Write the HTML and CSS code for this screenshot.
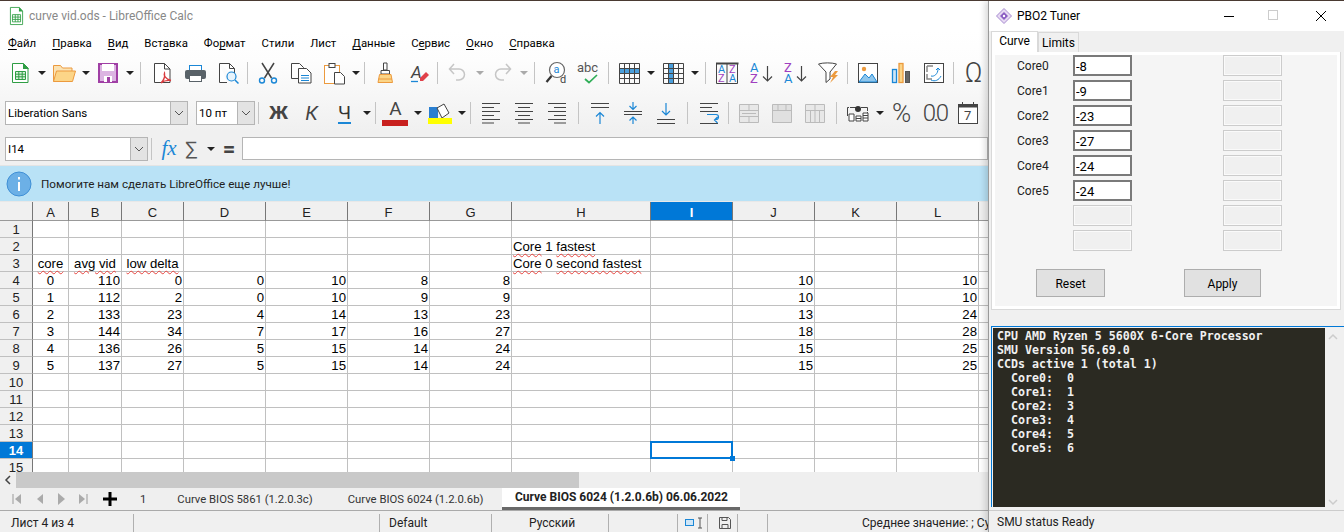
FILE: index.html
```html
<!DOCTYPE html>
<html lang="en">
<head>
    <meta charset="UTF-8">
    <title>curve vid.ods - LibreOffice Calc</title>
    <link rel="stylesheet" href="styles.css">
</head>
<body>
<div class="calc">
    <div class="chrome">
        <div class="titlebar">
            <svg width="13" height="18" viewBox="0 0 16 20" preserveAspectRatio="none"><path d="M.5.5h11l4 4v15H.5z" fill="#fff" stroke="#2f9e44"/><path d="M11 0l5 5h-5z" fill="#2f9e44"/><path d="M3 8.500h10v8H3zM3 11.200h10M3 13.800h10M6.500 8.500v8M9.800 8.500v8" fill="none" stroke="#2f9e44"/></svg>
            <span class="title-text">curve vid.ods - LibreOffice Calc</span>
        </div>
        <div class="menubar">
            <span><u>Ф</u>айл</span><span><u>П</u>равка</span><span><u>В</u>ид</span><span>Вст<u>а</u>вка</span><span>Фо<u>р</u>мат</span><span>Стили</span><span>Лист</span><span><u>Д</u>анные</span><span>С<u>е</u>рвис</span><span><u>О</u>кно</span><span><u>С</u>правка</span>
        </div>

        <!-- standard toolbar -->
        <div class="toolbar tb-standard">
            <div class="btn"><svg width="24" height="24"><path d="M4.500 2.500h11l4.500 4.500v14.500H4.500z" fill="#fff" stroke="#2f9e44"/><path d="M15 2l6 6h-6z" fill="#2f9e44"/><path d="M7.500 10.500h10v8h-10zM7.500 13.200h10M7.500 15.800h10M10.800 10.500v8M14.200 10.500v8" fill="#d9f0dc" stroke="#2f9e44"/></svg></div>
            <div class="arrow"></div>
            <div class="btn"><svg width="24" height="24"><path d="M1.500 20.500v-16h7l2 2.500h9.500v3" fill="#fbe3b4" stroke="#ec9a3e"/><path d="M1.500 20.500l3-10.500h19l-3 10.500z" fill="#fcd588" stroke="#ec9a3e"/></svg></div>
            <div class="arrow"></div>
            <div class="btn"><svg width="24" height="24"><rect x="3" y="3" width="18" height="18" fill="#dcb4e2" stroke="#a03fa5" stroke-width="2"/><rect x="6" y="3" width="12" height="7" fill="#fff"/><rect x="8" y="15" width="8" height="6" fill="#fff"/><rect x="11" y="16" width="3" height="5" fill="#a03fa5"/></svg></div>
            <div class="arrow"></div>
            <div class="sep sep-w"></div>
            <div class="btn"><svg width="24" height="24"><path d="M4.500 2.500h10l5.500 5.500v13.500H4.500z" fill="#fff" stroke="#444"/><path d="M14.500 2.500v5.500h5.500" fill="none" stroke="#444"/><path d="M11 22c3-3 4-7 3.500-10-1 2 .5 6 6.500 7.500-4-.5-7 0-10 2.500z" fill="none" stroke="#d93a3e" stroke-width="1.300"/></svg></div>
            <div class="btn"><svg width="24" height="24"><rect x="6.500" y="4.500" width="12" height="6" fill="#fff" stroke="#1b87d6"/><rect x="2" y="9" width="21" height="9" rx="2" fill="#596268"/><rect x="6.500" y="14.500" width="12" height="6" fill="#fff" stroke="#596268"/></svg></div>
            <div class="btn"><svg width="24" height="24"><path d="M3.500 2.500h10l5 5v7M11 21.500H3.500v-19" fill="#fff" stroke="#444"/><path d="M13.500 2.500v5h5" fill="none" stroke="#444"/><circle cx="15.500" cy="15.500" r="4.500" fill="#e8f4fc" stroke="#1b87d6" stroke-width="1.200"/><path d="M19 19l3.500 3.500" stroke="#1b87d6" stroke-width="1.500"/></svg></div>
            <div class="sep"></div>
            <div class="btn"><svg width="24" height="24"><path d="M6 2l9.500 15M18 2L8.500 17" stroke="#444" stroke-width="1.500" fill="none"/><circle cx="6" cy="19.500" r="2.500" fill="none" stroke="#1b87d6" stroke-width="1.400"/><circle cx="18" cy="19.500" r="2.500" fill="none" stroke="#1b87d6" stroke-width="1.400"/></svg></div>
            <div class="btn"><svg width="24" height="24"><path d="M2.500 2.500h8l4 4v11h-12z" fill="#fff" stroke="#444"/><path d="M9.500 7.500h8l4.500 4.500v10H9.500z" fill="#fff" stroke="#444"/><path d="M12 14.500h8M12 17h8M12 19.500h8" stroke="#1b87d6"/></svg></div>
            <div class="btn"><svg width="24" height="24"><rect x="2.500" y="4.500" width="15" height="18" fill="#fff" stroke="#ec9a3e"/><rect x="7" y="2.500" width="6" height="4" fill="#fff" stroke="#444"/><path d="M12.500 11.500h6l4 4v7.500h-10z" fill="#fff" stroke="#444"/></svg></div>
            <div class="arrow"></div>
            <div class="sep"></div>
            <div class="btn"><svg width="24" height="24"><path d="M10.500 2h3.500v7h-3.500z" fill="#fff" stroke="#444"/><path d="M8 9.500h8.500v3.500H8z" fill="#fff" stroke="#444"/><path d="M6.500 13.500h11.500l1.500 8H5z" fill="#fbd588" stroke="#ec9a3e"/><path d="M5.500 18h13.500" stroke="#ec9a3e"/></svg></div>
            <div class="btn"><svg width="24" height="24"><text x="5" y="17" class="svg-a">A</text><path d="M5 20.500h7" stroke="#1b87d6" stroke-width="1.300"/><path d="M14 17l6-6 3 3-6 6h-3z" fill="#e0414a"/></svg></div>
            <div class="sep"></div>
            <div class="btn"><svg width="24" height="24"><path d="M8 3L3.500 8 8 13M4 8h9a5.500 5.500 0 0 1 0 11h-3" fill="none" stroke="#c6c6c6" stroke-width="1.500"/></svg></div>
            <div class="arrow off"></div>
            <div class="btn"><svg width="24" height="24"><path d="M16 3l4.500 5-4.500 5M20 8h-9a5.500 5.500 0 0 0 0 11h3" fill="none" stroke="#c6c6c6" stroke-width="1.500"/></svg></div>
            <div class="arrow off"></div>
            <div class="sep sep-w"></div>
            <div class="btn"><svg width="24" height="24"><circle cx="13" cy="9" r="7.500" fill="#fff" stroke="#666" stroke-width="1.200"/><path d="M7.500 15L2.500 21" stroke="#333" stroke-width="2.200"/><text x="9.500" y="12" class="svg-s blue">a</text><text x="16" y="22" class="svg-s dark">d</text></svg></div>
            <div class="btn"><svg width="26" height="24"><text x="1" y="11" class="svg-abc">abc</text><path d="M9 18l4 3.500 8-7.500" fill="none" stroke="#2fae57" stroke-width="1.700"/></svg></div>
            <div class="sep"></div>
            <div class="btn"><svg width="24" height="24"><path d="M2 7h20v5H2z" fill="#4b9fdc"/><path d="M2.500 2.500h20v20h-20zM2.500 7.500h20M2.500 12.500h20M2.500 17.500h20M7.500 2.500v20M12.500 2.500v20M17.500 2.500v20" fill="none" stroke="#444"/></svg></div>
            <div class="arrow"></div>
            <div class="btn"><svg width="24" height="24"><path d="M8 2h5v20H8z" fill="#4b9fdc"/><path d="M2.500 2.500h20v20h-20zM2.500 7.500h20M2.500 12.500h20M2.500 17.500h20M7.500 2.500v20M12.500 2.500v20M17.500 2.500v20" fill="none" stroke="#444"/></svg></div>
            <div class="arrow"></div>
            <div class="sep sep-w"></div>
            <div class="btn"><svg width="24" height="24"><path d="M1 2.500h22.500" stroke="#444" stroke-width="2"/><path d="M1.500 2.500h21v20h-21zM12 2.500v20" fill="none" stroke="#444"/><text x="3" y="12" class="svg-s blue">A</text><text x="3" y="21" class="svg-s purple">Z</text><text x="14" y="12" class="svg-s purple">Z</text><text x="14" y="21" class="svg-s blue">A</text></svg></div>
            <div class="btn btn-wide"><svg width="24" height="24"><text x="1" y="11" class="svg-m blue">A</text><text x="1" y="22" class="svg-m purple">Z</text><path d="M18.500 5v15M14 15.500l4.500 4.500 4.500-4.500" fill="none" stroke="#444" stroke-width="1.200"/></svg></div>
            <div class="btn"><svg width="24" height="24"><text x="1" y="11" class="svg-m purple">Z</text><text x="1" y="22" class="svg-m blue">A</text><path d="M18.500 5v15M14 15.500l4.500 4.500 4.500-4.500" fill="none" stroke="#444" stroke-width="1.200"/></svg></div>
            <div class="btn"><svg width="24" height="24"><path d="M2.500 3c5-1.500 13-1.500 18 0l-6.500 8v7l-4 3.500V11z" fill="#fff" stroke="#444"/><path d="M19 10l-5 6h3l-3 6 8-8h-3l3-4z" fill="#ec9a3e"/></svg></div>
            <div class="sep"></div>
            <div class="btn"><svg width="24" height="24"><rect x="2.500" y="2.500" width="19" height="19" fill="#fff" stroke="#444"/><circle cx="8" cy="8" r="2.200" fill="#ec9a3e"/><path d="M3 21l6-8 4 4 3-4 5 8z" fill="#8fc6ec" stroke="#1b87d6"/></svg></div>
            <div class="btn"><svg width="24" height="24"><rect x="3.500" y="8.500" width="4" height="13" fill="#cfe6f7" stroke="#1b87d6" stroke-width="1.300"/><rect x="10" y="2.500" width="4" height="19" fill="#fbd588" stroke="#ec9a3e" stroke-width="1.300"/><rect x="16.500" y="10.500" width="4" height="11" fill="#666" stroke="#555"/></svg></div>
            <div class="btn"><svg width="24" height="24"><rect x="2.500" y="2.500" width="19" height="19" fill="#fff" stroke="#444"/><path d="M5 5h6M5 5v6M5 13v5h5" fill="none" stroke="#888" stroke-width="1.500"/><path d="M9 15c3 1 7-2 7-7M14 9l2-2 2 2M9 19c4 2 8 0 10-4" fill="none" stroke="#1b87d6"/></svg></div>
            <div class="sep"></div>
            <div class="btn btn-text omega">Ω</div>
        </div>

        <!-- formatting toolbar -->
        <div class="toolbar tb-format">
            <div class="combo combo-font"><span class="combo-text">Liberation Sans</span><span class="combo-btn"><svg width="10" height="6"><path d="M1 1l4 4 4-4" fill="none" stroke="#555"/></svg></span></div>
            <div class="combo combo-size"><span class="combo-text">10 пт</span><span class="combo-btn"><svg width="10" height="6"><path d="M1 1l4 4 4-4" fill="none" stroke="#555"/></svg></span></div>
            <div class="sep"></div>
            <div class="btn btn-text fmt-b">Ж</div>
            <div class="btn btn-text fmt-i">К</div>
            <div class="btn btn-text fmt-u">Ч</div>
            <div class="arrow"></div>
            <div class="sep"></div>
            <div class="btn btn-text fmt-color">A</div>
            <div class="arrow"></div>
            <div class="btn"><svg width="24" height="24"><path d="M1 6h9v11H1z" fill="#2a7fd0"/><path d="M9 7l7-4 5 9-7 5z" fill="#fff" stroke="#444"/><path d="M0 20h24" stroke="#ffff00" stroke-width="6"/></svg></div>
            <div class="arrow"></div>
            <div class="sep"></div>
            <div class="btn"><svg width="24" height="24"><path d="M3 2.500h18M3 6.500h12M3 10.500h18M3 14.500h12M3 18.500h18M3 22h12" stroke="#444" fill="none"/></svg></div>
            <div class="btn"><svg width="24" height="24"><path d="M3 2.500h18M6 6.500h12M3 10.500h18M6 14.500h12M3 18.500h18M6 22h12" stroke="#444" fill="none"/></svg></div>
            <div class="btn"><svg width="24" height="24"><path d="M3 2.500h18M9 6.500h12M3 10.500h18M9 14.500h12M3 18.500h18M9 22h12" stroke="#444" fill="none"/></svg></div>
            <div class="sep sep-w"></div>
            <div class="btn"><svg width="24" height="24"><path d="M3 2.500h18M3 6.500h18" stroke="#444"/><path d="M12 23V12M8 15.500l4-4 4 4" fill="none" stroke="#1b87d6" stroke-width="1.200"/></svg></div>
            <div class="btn"><svg width="24" height="24"><path d="M3 10.500h18M3 13.500h18" stroke="#444"/><path d="M12 1v7M8.500 5l3.500 3.500L15.500 5M12 23v-7M8.500 19.500L12 16l3.500 3.500" fill="none" stroke="#1b87d6" stroke-width="1.200"/></svg></div>
            <div class="btn"><svg width="24" height="24"><path d="M3 18.500h18M3 22.500h18" stroke="#444"/><path d="M12 2v12M8 10l4 4 4-4" fill="none" stroke="#1b87d6" stroke-width="1.200"/></svg></div>
            <div class="sep sep-w"></div>
            <div class="btn"><svg width="24" height="24"><path d="M3 2.500h18M3 6.500h12M3 10.500h18M3 22.500h18" stroke="#444" fill="none"/><path d="M10 14.500h9a2.500 2.500 0 0 1 0 5h-1M20.500 17l-3 3 3 3" transform="translate(0 -1)" fill="none" stroke="#1b87d6" stroke-width="1.200"/></svg></div>
            <div class="sep"></div>
            <div class="btn"><svg width="24" height="24"><path d="M2.500 3.500h19v18h-19zM2.500 9.500h19M2.500 15.500h19M12 3.500v6M12 15.500v6" fill="#e8e8e8" stroke="#bbb"/><path d="M5 12.500h14" stroke="#bbb"/></svg></div>
            <div class="btn"><svg width="24" height="24"><path d="M2.500 3.500h19v18h-19zM2.500 9.500h19M8 3.500v6M16 3.500v6" fill="#e0e0e0" stroke="#bbb"/></svg></div>
            <div class="btn"><svg width="24" height="24"><path d="M2.500 3.500h19v18h-19zM2.500 9.500h19M7.500 9.500v12M12 9.500v12M16.500 9.500v12M12 3.500v6" fill="#e8e8e8" stroke="#bbb"/></svg></div>
            <div class="sep sep-w"></div>
            <div class="btn"><svg width="24" height="24"><path d="M1.500 15V6.500h20V15" fill="none" stroke="#444" stroke-dasharray="10 1"/><circle cx="12" cy="8" r="3" fill="#333"/><path d="M3 13h5v7H3zM10 15h5v5h-5zM17 12h5v8h-5z" fill="#fff" stroke="#444"/><path d="M17 14.500h5M17 17h5M10 17.500h5" stroke="#444"/></svg></div>
            <div class="arrow"></div>
            <div class="btn btn-text fmt-pct">%</div>
            <div class="btn btn-text fmt-num">0.0</div>
            <div class="btn"><svg width="24" height="24"><rect x="2.500" y="3.500" width="19" height="19" fill="#fff" stroke="#444"/><path d="M2 5h20" stroke="#444" stroke-width="3"/><path d="M6.500 1v4M17.500 1v4" stroke="#444"/><text x="8" y="19" class="svg-m dark">7</text></svg></div>
        </div>

        <div class="formula">
            <div class="combo combo-name"><span class="combo-text">I14</span><span class="combo-btn"><svg width="10" height="6"><path d="M1 1l4 4 4-4" fill="none" stroke="#555"/></svg></span></div>
            <div class="sep sep-f"></div>
            <span class="fx">fx</span>
            <span class="sigma">∑</span>
            <div class="arrow arrow-f"></div>
            <span class="equals">=</span>
            <div class="formula-input"></div>
        </div>
    </div>

    <div class="infobar">
        <svg width="26" height="26"><circle cx="13" cy="13" r="12" fill="#6cb0e6" stroke="#3f8fd6"/><path d="M13 11v9M13 6v2.500" stroke="#fff" stroke-width="2" fill="none"/></svg>
        <span>Помогите нам сделать LibreOffice еще лучше!</span>
    </div>

    <div class="sheet">
        <table class="grid">
            <colgroup>
                <col class="c-head"><col class="c-a"><col class="c-b"><col class="c-c"><col class="c-d"><col class="c-d"><col class="c-d"><col class="c-d"><col class="c-h"><col class="c-d"><col class="c-d"><col class="c-d"><col class="c-d"><col class="c-x">
            </colgroup>
            <tr class="heads"><th></th><th>A</th><th>B</th><th>C</th><th>D</th><th>E</th><th>F</th><th>G</th><th>H</th><th class="on">I</th><th>J</th><th>K</th><th>L</th><th></th></tr>
            <tr><th>1</th><td></td><td></td><td></td><td></td><td></td><td></td><td></td><td></td><td></td><td></td><td></td><td></td><td></td></tr>
            <tr><th>2</th><td></td><td></td><td></td><td></td><td></td><td></td><td></td><td class="txt"><span class="sp">Core</span> 1 <span class="sp">fastest</span></td><td></td><td></td><td></td><td></td><td></td></tr>
            <tr><th>3</th><td class="mid"><span class="sp">core</span></td><td class="mid"><span class="sp">avg vid</span></td><td class="mid"><span class="sp">low delta</span></td><td></td><td></td><td></td><td></td><td class="txt"><span class="sp">Core</span> 0 <span class="sp">second fastest</span></td><td></td><td></td><td></td><td></td><td></td></tr>
            <tr><th>4</th><td class="mid">0</td><td>110</td><td>0</td><td>0</td><td>10</td><td>8</td><td>8</td><td></td><td></td><td>10</td><td></td><td>10</td><td></td></tr>
            <tr><th>5</th><td class="mid">1</td><td>112</td><td>2</td><td>0</td><td>10</td><td>9</td><td>9</td><td></td><td></td><td>10</td><td></td><td>10</td><td></td></tr>
            <tr><th>6</th><td class="mid">2</td><td>133</td><td>23</td><td>4</td><td>14</td><td>13</td><td>23</td><td></td><td></td><td>13</td><td></td><td>24</td><td></td></tr>
            <tr><th>7</th><td class="mid">3</td><td>144</td><td>34</td><td>7</td><td>17</td><td>16</td><td>27</td><td></td><td></td><td>18</td><td></td><td>28</td><td></td></tr>
            <tr><th>8</th><td class="mid">4</td><td>136</td><td>26</td><td>5</td><td>15</td><td>14</td><td>24</td><td></td><td></td><td>15</td><td></td><td>25</td><td></td></tr>
            <tr><th>9</th><td class="mid">5</td><td>137</td><td>27</td><td>5</td><td>15</td><td>14</td><td>24</td><td></td><td></td><td>15</td><td></td><td>25</td><td></td></tr>
            <tr><th>10</th><td></td><td></td><td></td><td></td><td></td><td></td><td></td><td></td><td></td><td></td><td></td><td></td><td></td></tr>
            <tr><th>11</th><td></td><td></td><td></td><td></td><td></td><td></td><td></td><td></td><td></td><td></td><td></td><td></td><td></td></tr>
            <tr><th>12</th><td></td><td></td><td></td><td></td><td></td><td></td><td></td><td></td><td></td><td></td><td></td><td></td><td></td></tr>
            <tr><th>13</th><td></td><td></td><td></td><td></td><td></td><td></td><td></td><td></td><td></td><td></td><td></td><td></td><td></td></tr>
            <tr><th class="on">14</th><td></td><td></td><td></td><td></td><td></td><td></td><td></td><td></td><td class="cursor"></td><td></td><td></td><td></td><td></td></tr>
            <tr><th>15</th><td></td><td></td><td></td><td></td><td></td><td></td><td></td><td></td><td></td><td></td><td></td><td></td><td></td></tr>
        </table>
    </div>

    <div class="hscroll">
        <span class="hscroll-arrow"><svg width="8" height="10"><path d="M6 1L2 5l4 4" fill="none" stroke="#444" stroke-width="1.500"/></svg></span>
        <span class="hscroll-thumb"></span>
    </div>

    <div class="tabs">
        <div class="tab-nav">
            <svg width="22" height="14"><path d="M7 2v10" stroke="#999"/><path d="M15 2L9 7l6 5z" fill="#aaa"/></svg>
            <svg width="22" height="14"><path d="M15 2L9 7l6 5z" fill="#aaa"/></svg>
            <svg width="22" height="14"><path d="M8 1l7 6-7 6z" fill="#aaa"/></svg>
            <svg width="22" height="14"><path d="M7 2l6 5-6 5z" fill="#aaa"/><path d="M15 2v10" stroke="#999"/></svg>
        </div>
        <svg class="tab-plus" width="14" height="14"><path d="M7 0v14M0 7h14" stroke="#000" stroke-width="3"/></svg>
        <span class="tab tab-1">1</span>
        <span class="tab tab-2">Curve BIOS 5861 (1.2.0.3c)</span>
        <span class="tab tab-3">Curve BIOS 6024 (1.2.0.6b)</span>
        <span class="tab tab-active">Curve BIOS 6024 (1.2.0.6b) 06.06.2022</span>
    </div>

    <div class="statusbar">
        <span class="st st-sheet">Лист 4 из 4</span>
        <span class="st st-empty"></span>
        <span class="st st-style">Default</span>
        <span class="st st-lang">Русский</span>
        <span class="st st-gap"></span>
        <span class="st st-ins"><svg width="22" height="12"><rect x=".5" y="2.500" width="8" height="6" fill="#cfe6f7" stroke="#1b87d6"/><path d="M15 1v10M13 1h4M13 11h4" stroke="#555" fill="none"/></svg></span>
        <span class="st st-save"><svg width="12" height="12"><path d="M.5.5h9l2 2v9H.5zM3 .5v3h5v-3M3 11.500v-4h6v4" fill="none" stroke="#555"/></svg></span>
        <span class="st st-sign"></span>
        <span class="st st-sum">Среднее значение: ; Су</span>
    </div>
</div>

<div class="tuner">
    <div class="tuner-title">
        <svg width="16" height="16" viewBox="0 0 16 16"><path d="M8 .5L15.500 8 8 15.500.5 8z" fill="#e6d9f2" stroke="#a78bd0"/><path d="M8 4l4 4-4 4-4-4z" fill="#8a5cc2"/><circle cx="8" cy="8" r="1.200" fill="#fff"/></svg>
        <span class="tuner-name">PBO2 Tuner</span>
        <svg class="win-min" width="12" height="12"><path d="M1 6.500h10" stroke="#000"/></svg>
        <svg class="win-max" width="12" height="12"><rect x=".5" y=".5" width="9" height="9" fill="none" stroke="#ccc"/></svg>
        <svg class="win-close" width="12" height="12"><path d="M1 1l10 10M11 1L1 11" stroke="#000"/></svg>
    </div>
    <div class="tuner-tabs">
        <span class="ttab ttab-on">Curve</span>
        <span class="ttab">Limits</span>
    </div>
    <div class="panel">
        <div class="core-grid">
            <label>Core0</label><input class="field" value="-8"><span></span><input class="field off" disabled>
            <label>Core1</label><input class="field" value="-9"><span></span><input class="field off" disabled>
            <label>Core2</label><input class="field" value="-23"><span></span><input class="field off" disabled>
            <label>Core3</label><input class="field" value="-27"><span></span><input class="field off" disabled>
            <label>Core4</label><input class="field" value="-24"><span></span><input class="field off" disabled>
            <label>Core5</label><input class="field" value="-24"><span></span><input class="field off" disabled>
            <label></label><input class="field off" disabled><span></span><input class="field off" disabled>
            <label></label><input class="field off" disabled><span></span><input class="field off" disabled>
        </div>
        <div class="actions">
            <button class="action action-reset">Reset</button>
            <button class="action action-apply">Apply</button>
        </div>
    </div>
    <div class="console">
        <pre class="console-text">CPU AMD Ryzen 5 5600X 6-Core Processor
SMU Version 56.69.0
CCDs active 1 (total 1)
  Core0:  0
  Core1:  1
  Core2:  3
  Core3:  4
  Core4:  5
  Core5:  6</pre>
        <div class="console-scroll">
            <svg width="10" height="6"><path d="M1 5l4-4 4 4" fill="none" stroke="#ccc" stroke-width="1.500"/></svg>
            <svg width="10" height="6"><path d="M1 1l4 4 4-4" fill="none" stroke="#ccc" stroke-width="1.500"/></svg>
        </div>
    </div>
    <div class="tuner-status">SMU status Ready</div>
</div>
</body>
</html>
```

FILE: styles.css
```css
* {
    box-sizing: border-box;
}

html, body {
    margin: 0;
    padding: 0;
    height: 532px;
    overflow: hidden;
}

body {
    display: flex;
    font-family: Roboto, "Noto Sans", sans-serif;
    font-size: 12px;
    color: #000;
    background: #f0f0f0;
    border-top: 1px solid #4a3a32;
}

svg {
    overflow: visible;
}

u {
    text-underline-offset: 2px;
}

/* calc window */
.calc {
    width: 988px;
    flex: none;
    overflow: hidden;
    display: flex;
    flex-direction: column;
    background: #fff;
}

.chrome {
    background: linear-gradient(#fff 30px, #fdfdfd 60px, #f0f0f0 130px);
}

.titlebar {
    height: 30px;
    display: flex;
    align-items: center;
    gap: 6px;
    padding-left: 10px;
    color: #888;
}

.title-text {
    font-size: 12px;
}

.menubar {
    height: 24px;
    display: flex;
    align-items: center;
    gap: 16px;
    padding-left: 8px;
    font-size: 11.4px;
}

.toolbar {
    display: flex;
    align-items: center;
    height: 39px;
    padding-left: 3px;
}

.tb-standard {
    height: 38px;
    padding-bottom: 2px;
}

.tb-format {
    padding-left: 5px;
    height: 39px;
}

.btn {
    width: 33px;
    height: 28px;
    flex: none;
    display: flex;
    align-items: center;
    justify-content: center;
}

.btn-wide {
    width: 35px;
}

.btn-text {
    color: #444;
}

.omega {
    font-size: 27px;
    font-weight: 300;
    color: #444;
}

.arrow {
    width: 11px;
    flex: none;
    display: flex;
    justify-content: center;
}

.arrow::before {
    content: "";
    border-left: 4px solid transparent;
    border-right: 4px solid transparent;
    border-top: 4px solid #222;
}

.arrow.off::before {
    border-top-color: #aaa;
}

.arrow-f {
    margin-left: 3px;
}

.sep {
    width: 7px;
    height: 22px;
    flex: none;
    display: flex;
    justify-content: center;
}

.sep::before {
    content: "";
    width: 1px;
    background: #c4c4c4;
}

.sep-w {
    width: 10px;
}

/* combos */
.combo {
    height: 24px;
    display: flex;
    background: #fff;
    border: 1px solid #b5b5b5;
    flex: none;
}

.combo-text {
    flex: 1;
    padding-left: 2px;
    font-size: 11.5px;
    line-height: 22px;
}

.combo-btn {
    width: 17px;
    background: #e3e3e3;
    border-left: 1px solid #b5b5b5;
    display: flex;
    align-items: center;
    justify-content: center;
}

.combo-font {
    width: 183px;
}

.combo-size {
    width: 59px;
    margin-left: 8px;
}

.combo-name {
    width: 143px;
}

/* toolbar text buttons */
.fmt-b {
    font-size: 19px;
    font-weight: bold;
}

.fmt-i {
    font-size: 20px;
    font-style: italic;
}

.fmt-u {
    font-size: 19px;
    color: #333;
    text-decoration: underline #1b87d6 2px;
    text-underline-offset: 3px;
}

.fmt-color {
    position: relative;
    font-size: 19px;
    line-height: 20px;
    align-items: flex-start;
}

.fmt-color::after {
    content: "";
    position: absolute;
    left: 3px;
    right: 4px;
    bottom: 1px;
    height: 6px;
    background: #c8201e;
}

.fmt-pct {
    font-size: 26px;
    font-weight: 300;
}

.fmt-num {
    font-size: 24px;
    font-weight: 300;
    letter-spacing: -3px;
}

.svg-a {
    font: italic 17px Roboto, sans-serif;
    fill: #444;
}

.svg-s {
    font: 11px Roboto, sans-serif;
}

.svg-m {
    font: 13px Roboto, sans-serif;
}

.svg-abc {
    font: 13px Roboto, sans-serif;
    fill: #555;
}

.blue {
    fill: #1b87d6;
}

.purple {
    fill: #a03fc0;
}

.dark {
    fill: #444;
}

/* formula bar */
.formula {
    height: 33px;
    display: flex;
    align-items: center;
    padding-left: 5px;
    background: #f0f0f0;
}

.sep-f {
    margin-right: 3px;
}

.fx {
    width: 22px;
    font: italic 21px "Liberation Serif", serif;
    color: #1b87d6;
    text-align: center;
}

.sigma {
    width: 22px;
    font-size: 20px;
    color: #555;
    text-align: center;
}

.equals {
    width: 24px;
    margin-left: 1px;
    font-size: 22px;
    font-weight: bold;
    color: #444;
    text-align: center;
}

.formula-input {
    flex: 1;
    height: 23px;
    margin-left: 1px;
    background: #fff;
    border: 1px solid #b5b5b5;
}

/* info bar */
.infobar {
    height: 38px;
    display: flex;
    align-items: center;
    gap: 9px;
    padding-left: 6px;
    font-size: 11.7px;
    background: #b9e2f6;
    border-top: 1px solid #e4e4e4;
    border-bottom: 1px solid #e8e8e8;
    color: #222;
}

/* grid */
.sheet {
    height: 270px;
    overflow: hidden;
    flex: none;
}

.grid {
    table-layout: fixed;
    width: 1000px;
    border-collapse: separate;
    border-spacing: 0;
    font: 13.2px/16px "Liberation Sans", sans-serif;
    font-kerning: none;
}

.c-head { width: 33px; }
.c-a { width: 36px; }
.c-b { width: 53px; }
.c-c { width: 62px; }
.c-d { width: 82px; }
.c-h { width: 139px; }
.c-x { width: 22px; }

.grid td, .grid th {
    height: 17px;
    padding: 1px 0 0;
    overflow: visible;
    white-space: nowrap;
}

.grid td {
    border-right: 1px solid #c0c0c0;
    border-bottom: 1px solid #c0c0c0;
    padding-right: 1px;
    line-height: 15px;
    text-align: right;
}

.grid td.mid {
    text-align: center;
    padding-right: 0;
}

.grid td.txt {
    text-align: left;
    padding-left: 1px;
}

.grid th {
    background: #f0f0f0;
    font: 400 13px/15px "Liberation Sans", sans-serif;
    color: #222;
    text-align: center;
    border-right: 1px solid #777;
    border-bottom: 1px solid #c0c0c0;
}

.heads th {
    height: 19px;
    padding-top: 2px;
    border-bottom: 1px solid #999;
}

.grid th.on {
    background: #0078d7;
    color: #fff;
    font-weight: bold;
}

.sp {
    text-decoration: underline wavy #e8443f 1px;
    text-underline-offset: 2px;
}

.grid td.cursor {
    position: relative;
}

.cursor::before {
    content: "";
    position: absolute;
    left: -1px;
    top: -1px;
    right: -1px;
    bottom: -1px;
    border: 2px solid #0078d7;
}

.cursor::after {
    content: "";
    position: absolute;
    right: -3px;
    bottom: -3px;
    width: 5px;
    height: 5px;
    background: #0078d7;
}

/* scrollbar */
.hscroll {
    height: 16px;
    flex: none;
    display: flex;
    background: #efefef;
}

.hscroll-arrow {
    width: 16px;
    display: flex;
    align-items: center;
    justify-content: center;
}

.hscroll-thumb {
    width: 563px;
    background: #c9c9c9;
}

/* sheet tabs */
.tabs {
    height: 23px;
    flex: none;
    display: flex;
    align-items: center;
    background: #efefef;
    border-bottom: 1px solid #aaa;
    color: #333;
}

.tab-nav {
    width: 93px;
    padding-left: 6px;
    display: flex;
    flex: none;
}

.tab-plus {
    margin: 0 0 0 10px;
    flex: none;
}

.tab {
    flex: none;
    font-size: 11.3px;
}

.tab-1 { margin-left: 23px; }
.tab-2 { margin-left: 31px; }
.tab-3 { margin-left: 35px; }

.tab-active {
    margin-left: 19px;
    width: 238px;
    height: 22px;
    font-size: 12px;
    line-height: 18px;
    text-align: center;
    background: #fff;
    border-bottom: 3px solid #696969;
    font-weight: bold;
    color: #222;
    align-self: flex-start;
}

/* status bar */
.statusbar {
    height: 21px;
    flex: none;
    display: flex;
    background: #f0f0f0;
    color: #222;
    line-height: 21px;
    white-space: nowrap;
    overflow: hidden;
}

.st {
    flex: none;
    border-right: 1px solid #b0b0b0;
    height: 18px;
    line-height: 20px;
    margin-top: 3px;
    display: flex;
    align-items: center;
}

.st-sheet { width: 134px; padding-left: 11px; }
.st-empty { width: 246px; }
.st-style { width: 112px; padding-left: 9px; }
.st-lang { width: 117px; padding-left: 37px; }
.st-gap { width: 69px; }
.st-ins { width: 30px; padding-left: 7px; }
.st-save { width: 30px; padding-left: 11px; }
.st-sign { width: 30px; }
.st-sum { border: 0; padding-left: 94px; }

/* tuner window */
.tuner {
    width: 356px;
    flex: none;
    display: flex;
    flex-direction: column;
    background: #f0f0f0;
    border-left: 1px solid #9a9a9a;
    box-shadow: -3px 0 6px rgba(0, 0, 0, .15);
    z-index: 1;
}

.tuner-title {
    height: 30px;
    flex: none;
    display: flex;
    align-items: center;
    background: #fff;
    padding-left: 7px;
}

.tuner-name {
    margin-left: 5px;
    width: 206px;
}

.win-min { margin-right: 33px; }
.win-max { margin-right: 35px; }

.tuner-tabs {
    height: 21px;
    flex: none;
    display: flex;
    align-items: flex-end;
    padding-left: 2px;
}

.ttab {
    width: 41px;
    height: 20px;
    text-align: center;
    line-height: 20px;
    background: #f0f0f0;
    border: 1px solid #d9d9d9;
    border-bottom: 0;
}

.ttab-on {
    width: 47px;
    height: 21px;
    line-height: 18px;
    background: #fff;
}

.panel {
    width: 350px;
    height: 258px;
    flex: none;
    margin-left: 2px;
    background: #f5f5f5;
    border: 1px solid #d9d9d9;
    border-top: 0;
    box-shadow: inset 0 0 0 3px #fff;
    padding: 3px 3px;
}

.core-grid {
    display: grid;
    grid-template-columns: 56px 59px 91px 59px;
    grid-auto-rows: 21px;
    row-gap: 4px;
    padding-left: 22px;
}

.core-grid label {
    line-height: 23px;
    color: #222;
}

.field {
    width: 59px;
    height: 21px;
    margin: 0;
    padding: 1px 0 0 1px;
    font: 13px Roboto, sans-serif;
    color: #000;
    background: #fff;
    border: 2px solid #7a7a7a;
    border-radius: 0;
    outline: 0;
}

.field.off {
    background: #f0f0f0;
    border: 1px solid #ccc;
    box-shadow: inset 0 0 0 1px #fafafa;
}

.actions {
    display: flex;
    gap: 79px;
    margin: 18px 0 0 41px;
}

.action {
    height: 28px;
    padding: 1px 0 0;
    font: 12px Roboto, sans-serif;
    color: #000;
    background: #e1e1e1;
    border: 1px solid #adadad;
}

.action-reset { width: 69px; }
.action-apply { width: 77px; }

.console {
    height: 181px;
    flex: none;
    margin: 16px 0 0 2px;
    display: flex;
    background: #f0f0f0;
    border-top: 1px solid #0078d7;
    border-left: 1px solid #0078d7;
    padding: 1px 0 0 1px;
}

.console-text {
    width: 332px;
    margin: 0;
    padding: 1px 4px;
    font: bold 11.62px/14px "DejaVu Sans Mono", monospace;
    color: #f0f0f0;
    background: #2b2a22;
}

.console-scroll {
    width: 16px;
    padding: 6px 0 2px 3px;
    display: flex;
    flex-direction: column;
    justify-content: space-between;
}

.tuner-status {
    margin-top: 3px;
    height: 22px;
    flex: none;
    padding-left: 8px;
    line-height: 22px;
    border-top: 1px solid #ccc;
    color: #222;
}
```
